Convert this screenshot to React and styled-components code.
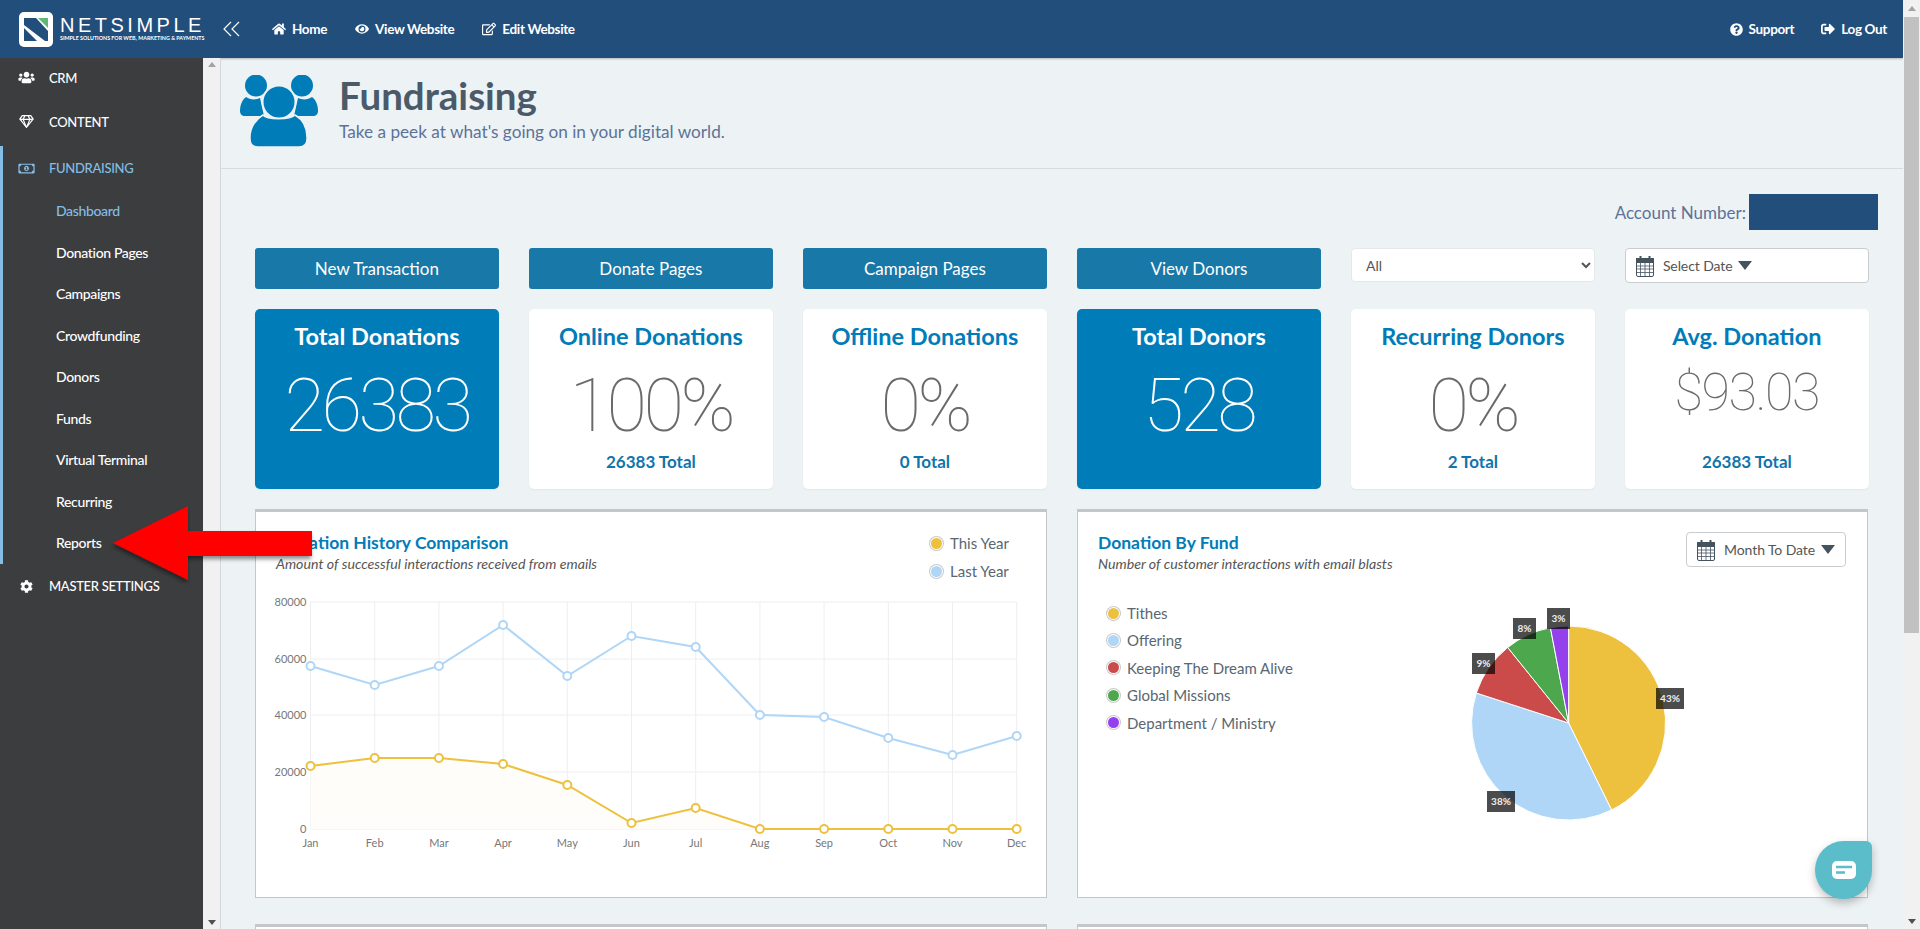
import React from 'react'
import styled, { createGlobalStyle } from 'styled-components'
import {
  FaHome, FaEye, FaRegEdit, FaQuestionCircle, FaSignOutAlt, FaUsers, FaRegGem, FaRegMoneyBillAlt, FaCog,
} from 'react-icons/fa'

const font = `Lato, "Noto Sans", "Liberation Sans", sans-serif`

const GlobalStyle = createGlobalStyle`
  html, body { margin: 0; padding: 0; height: 100%; overflow: hidden; }
  body { font-family: ${font}; background: #edf2f5; }
  * { box-sizing: border-box; }
`

const Root = styled.div`
  position: relative;
  display: flex;
  width: 1920px;
  height: 929px;
  overflow: hidden;
`
const Page = styled.div`
  flex: 1;
  min-width: 0;
  display: flex;
  flex-direction: column;
`
const TopBar = styled.header`
  height: 58px;
  flex: none;
  background: #224e7c;
  display: flex;
  align-items: center;
  padding: 0 19px;
  color: #fff;
  box-shadow: 0 1px 2px rgba(0, 0, 0, 0.25);
`
const Logo = styled.div`
  display: flex;
  align-items: center;
  gap: 7px;
  width: 204px;
  flex: none;
`
const LogoMark = styled.div`
  width: 34px;
  height: 35px;
  flex: none;
  background: #fff;
  border-radius: 5px;
  display: flex;
  align-items: center;
  justify-content: center;
`
const LogoText = styled.div`
  display: flex;
  flex-direction: column;
  color: #fff;
`
const LogoName = styled.span`
  font-family: "Liberation Sans", sans-serif;
  font-size: 20px;
  line-height: 18px;
  letter-spacing: 3.5px;
`
const LogoTag = styled.span`
  font-size: 5.35px;
  line-height: 8px;
  font-weight: 700;
  white-space: nowrap;
`
const TopNav = styled.nav`
  display: flex;
  align-items: center;
  gap: 28px;
  margin-left: 31px;
`
const TopLink = styled.a`
  display: flex;
  align-items: center;
  gap: 6px;
  font-size: 13.5px;
  font-weight: 700;
  letter-spacing: -0.35px;
  color: #fff;
  white-space: nowrap;
`
const TopRight = styled(TopNav)`
  margin-left: auto;
  margin-right: -3px;
  gap: 27px;
`
const Body = styled.div`
  flex: 1;
  display: flex;
  min-height: 0;
`
const Sidebar = styled.aside`
  width: 203px;
  flex: none;
  background: #3c3d3f;
  color: #fff;
`
const SideTop = styled.div`
  display: flex;
  align-items: center;
  height: ${({ $h }) => $h || 45}px;
  padding-left: 18px;
  gap: 14px;
  font-size: 13px;
  letter-spacing: -0.3px;
  font-weight: 500;
  color: ${({ $active }) => ($active ? '#84bde6' : '#fff')};
  svg { width: 17px; flex: none; }
`
const SideGroup = styled.div`
  border-left: 3px solid #84bde6;
  ${SideTop} { padding-left: 15px; height: 44px; }
`
const SubItem = styled.div`
  height: 41.5px;
  display: flex;
  align-items: center;
  padding-left: 53px;
  font-size: 14px;
  letter-spacing: -0.35px;
  font-weight: 500;
  color: ${({ $active }) => ($active ? '#84bde6' : '#fff')};
`
const SideScroll = styled.div`
  width: 17px;
  flex: none;
  background: #f1f1f1;
  display: flex;
  flex-direction: column;
  justify-content: space-between;
  align-items: center;
  padding: 4px 0;
`
const ArrowUp = styled.i`
  width: 0;
  height: 0;
  border-left: 4px solid transparent;
  border-right: 4px solid transparent;
  border-bottom: 5px solid #a3a3a3;
`
const ArrowDown = styled.i`
  display: block;
  width: 0;
  height: 0;
  border-left: 4px solid transparent;
  border-right: 4px solid transparent;
  border-top: 5px solid #505050;
`
const Main = styled.main`
  flex: 1;
  min-width: 0;
  border-left: 1px solid #d5d8da;
  overflow: hidden;
`
const PageHead = styled.div`
  height: 111px;
  border-bottom: 1px solid #d8dcdf;
  display: flex;
  padding: 17px 0 0 19px;
  gap: 21px;
`
const PageTitle = styled.h1`
  margin: -2px 0 0;
  font-size: 38.5px;
  line-height: 44px;
  font-weight: 700;
  color: #4a5a68;
`
const PageSub = styled.p`
  margin: 5px 0 0;
  font-size: 17.2px;
  line-height: 20px;
  color: #5c7299;
`
const Content = styled.div`
  padding: 25px 34px 0 34px;
`
const AccountRow = styled.div`
  display: flex;
  justify-content: flex-end;
  align-items: center;
  height: 36px;
  gap: 3px;
  margin-right: -9px;
  font-size: 17px;
  color: #5c7299;
`
const Redacted = styled.span`
  width: 129px;
  height: 36px;
  background: #224e7c;
`
const Grid = styled.div`
  display: grid;
  grid-template-columns: repeat(6, 243.8px);
  column-gap: 30.2px;
  margin-top: ${({ $mt }) => $mt}px;
`
const ActionButton = styled.a`
  height: 41px;
  background: #1878a8;
  border-radius: 3px;
  color: #fff;
  display: flex;
  align-items: center;
  justify-content: center;
  font-size: 17px;
`
const Select = styled.select`
  height: 34px;
  background: #fff;
  border: 1px solid #e4e8ea;
  border-radius: 4px;
  font-family: ${font};
  font-size: 14px;
  color: #555;
  padding-left: 10px;
`
const DateButton = styled.div`
  height: 35px;
  display: flex;
  align-items: center;
  gap: 9px;
  padding: 0 10px;
  background: #fff;
  border: 1px solid #c9cdd0;
  border-radius: 4px;
  font-size: 14px;
  letter-spacing: -0.1px;
  color: #555;
`
const Caret = styled.i`
  width: 0;
  height: 0;
  margin-left: -3px;
  border-left: 7px solid transparent;
  border-right: 7px solid transparent;
  border-top: 9px solid #45535f;
`
const StatCard = styled.div`
  height: 180px;
  border-radius: 5px;
  background: ${({ $solid }) => ($solid ? '#007cb8' : '#fff')};
  color: ${({ $solid }) => ($solid ? '#fff' : '#6a6a6a')};
  box-shadow: 0 1px 2px rgba(0, 0, 0, 0.05);
  display: flex;
  flex-direction: column;
  align-items: center;
  text-align: center;
`
const StatTitle = styled.div`
  margin-top: 12px;
  height: 30px;
  line-height: 30px;
  font-size: 23.5px;
  font-weight: 700;
  color: ${({ $solid }) => ($solid ? '#fff' : '#007cb8')};
`
const StatValue = styled.div`
  margin-top: ${({ $small }) => ($small ? 4 : 17)}px;
  height: 76px;
  line-height: 76px;
  font-family: Roboto, ${font};
  font-size: ${({ $small }) => ($small ? 52 : 74)}px;
  letter-spacing: ${({ $small }) => ($small ? -1.5 : -3.5)}px;
  font-weight: 100;
`
const StatFoot = styled.div`
  margin-top: ${({ $small }) => ($small ? 21 : 8)}px;
  font-size: 17px;
  line-height: 20px;
  font-weight: 700;
  color: #0f75ab;
`
const ChartGrid = styled.div`
  display: grid;
  grid-template-columns: 792px 791px;
  column-gap: 30px;
  row-gap: 26px;
  margin-top: 20px;
`
const ChartCard = styled.section`
  height: 389px;
  background: #fff;
  border: 1px solid #c4c6c8;
  border-top: 3px solid #c4c6c8;
`
const CardHead = styled.div`
  height: 78px;
  display: flex;
  justify-content: space-between;
  padding: 20px 21px 0 20px;
`
const CardTitle = styled.h3`
  margin: 0;
  font-size: 17.5px;
  line-height: 22px;
  font-weight: 700;
  color: #007cb8;
`
const CardSub = styled.p`
  margin: -1px 0 0;
  font-size: 14.2px;
  line-height: 22px;
  font-style: italic;
  color: #555;
`
const Legend = styled.ul`
  list-style: none;
  margin: 0;
  padding: 0;
  display: flex;
  flex-direction: column;
  gap: ${({ $gap }) => $gap}px;
`
const LegendItem = styled.li`
  display: flex;
  align-items: center;
  gap: 8px;
  height: 20px;
  font-size: 15px;
  color: #5a6670;
`
const Dot = styled.i`
  width: 11px;
  height: 11px;
  border-radius: 50%;
  background: ${({ $c }) => $c};
  box-shadow: 0 0 0 1px #fff, 0 0 0 2px #c9c9c9;
`
const YearLegend = styled.div`
  margin-right: 16px;
  padding-top: 1px;
`
const PieBody = styled.div`
  display: flex;
`
const PieLegend = styled.div`
  width: 330px;
  padding: 13px 0 0 30px;
`
const PageScroll = styled.div`
  width: 17px;
  flex: none;
  background: #f1f1f1;
  display: flex;
  flex-direction: column;
  align-items: center;
  padding-top: 6px;
`
const Thumb = styled.div`
  width: 15px;
  height: 616px;
  margin-top: 6px;
  background: #c1c1c1;
`
const BottomArrow = styled.div`
  margin-top: auto;
  padding-bottom: 5px;
`
const Pointer = styled.svg`
  position: absolute;
  left: 100px;
  top: 495px;
  pointer-events: none;
`
const ChatBubble = styled.div`
  position: absolute;
  left: 1815px;
  top: 841px;
  width: 57px;
  height: 58px;
  background: #5bbcca;
  border-radius: 50% 6px 50% 50%;
  box-shadow: 0 4px 8px rgba(0, 0, 0, 0.25);
  display: flex;
  align-items: center;
  justify-content: center;
`

const months = ['Jan', 'Feb', 'Mar', 'Apr', 'May', 'Jun', 'Jul', 'Aug', 'Sep', 'Oct', 'Nov', 'Dec']
const lastYear = [666, 685, 666, 625, 676, 636, 647, 715, 717, 738, 755, 736]
const thisYear = [766, 758, 758, 764, 785, 823, 808, 829, 829, 829, 829, 829]
const chartLeft = 310.5
const chartStep = 64.2
const chartOrigin = { x: 256, y: 590 }
const px = (i) => chartLeft + i * chartStep - chartOrigin.x
const py = (y) => y - chartOrigin.y
const linePath = (arr) => arr.map((y, i) => `${i ? 'L' : 'M'}${px(i)} ${py(y)}`).join(' ')

const LineChart = () => (
  <svg width="790" height="270" style={{ display: 'block' }}>
    {[602, 659, 715, 772, 829].map((y, i) => (
      <g key={y}>
        <line x1={px(0)} x2={px(11)} y1={py(y)} y2={py(y)} stroke="#eeeeee" />
        <text x={px(0) - 4} y={py(y) + 4} textAnchor="end" fontSize="11" fill="#777">{80000 - i * 20000}</text>
      </g>
    ))}
    {months.map((m, i) => (
      <g key={m}>
        <line x1={px(i)} x2={px(i)} y1={py(602)} y2={py(829)} stroke="#eeeeee" />
        <text x={px(i)} y={py(847)} textAnchor="middle" fontSize="11" fill="#777">{m}</text>
      </g>
    ))}
    <path d={`${linePath(thisYear)} L${px(11)} ${py(829)} L${px(0)} ${py(829)} Z`} fill="#fefdf9" />
    <path d={linePath(lastYear)} fill="none" stroke="#afd6f7" strokeWidth="2" />
    <path d={linePath(thisYear)} fill="none" stroke="#edc13e" strokeWidth="2" />
    {lastYear.map((y, i) => <circle key={i} cx={px(i)} cy={py(y)} r="4" fill="#fff" stroke="#afd6f7" strokeWidth="2" />)}
    {thisYear.map((y, i) => <circle key={i} cx={px(i)} cy={py(y)} r="4" fill="#fff" stroke="#edc13e" strokeWidth="2" />)}
  </svg>
)

const slices = [
  { from: 0, to: 0.427, color: '#edc13e' },
  { from: 0.427, to: 0.8, color: '#afd6f7' },
  { from: 0.8, to: 0.892, color: '#cb4b4b' },
  { from: 0.892, to: 0.97, color: '#4da74d' },
  { from: 0.97, to: 1, color: '#9440ed' },
]
const pieLabels = [
  { t: '43%', x: 1656, y: 688, w: 28 },
  { t: '38%', x: 1487, y: 791, w: 28 },
  { t: '9%', x: 1472, y: 653, w: 23 },
  { t: '8%', x: 1513, y: 618, w: 23 },
  { t: '3%', x: 1547, y: 608, w: 23 },
]
const pieOrigin = { x: 1408, y: 590 }
const pieCx = 1568.6 - pieOrigin.x
const pieCy = 723 - pieOrigin.y
const polar = (f) => {
  const a = f * 2 * Math.PI
  return `${pieCx + 97 * Math.sin(a)} ${pieCy - 97 * Math.cos(a)}`
}

const PieChart = () => (
  <svg width="459" height="270" style={{ display: 'block' }}>
    {slices.map((s) => (
      <path
        key={s.color}
        d={`M${pieCx} ${pieCy} L${polar(s.from)} A97 97 0 ${s.to - s.from > 0.5 ? 1 : 0} 1 ${polar(s.to)} Z`}
        fill={s.color}
        stroke="#fff"
      />
    ))}
    {pieLabels.map((l) => (
      <g key={l.t}>
        <rect x={l.x - pieOrigin.x} y={l.y - pieOrigin.y} width={l.w} height="21" fill="#000" fillOpacity="0.7" />
        <text x={l.x - pieOrigin.x + l.w / 2} y={l.y - pieOrigin.y + 14} textAnchor="middle" fontSize="10" fontWeight="700" fill="#eee">{l.t}</text>
      </g>
    ))}
  </svg>
)

const PeopleIcon = () => (
  <svg width="78" height="73" viewBox="0 0 78 73" fill="#007cb8">
    <ellipse cx="16" cy="10.5" rx="11" ry="11" />
    <ellipse cx="62" cy="10.5" rx="11" ry="11" />
    <path d="M6 22c4 3 10 3 14 1l4 18H5c-3 0-5-2-5-5 0-6 2-11 6-14z" />
    <path d="M72 22c-4 3-10 3-14 1l-4 18h19c3 0 5-2 5-5 0-6-2-11-6-14z" />
    <ellipse cx="39" cy="27" rx="16.5" ry="16.5" stroke="#edf2f5" strokeWidth="2" />
    <path d="M23 40c4 5 27 5 32 0 7 4 12 12 12 22v2c0 5-3 8-8 8H18c-5 0-8-3-8-8v-2c0-10 6-18 13-22z" stroke="#edf2f5" strokeWidth="1.5" />
  </svg>
)

const CalendarIcon = () => (
  <svg width="18" height="22" viewBox="0 0 18 22" fill="none" stroke="#45535f">
    <rect x="0.5" y="3.5" width="17" height="18" rx="1.5" fill="#fff" />
    <rect x="0.5" y="3.5" width="17" height="4" fill="#45535f" />
    <path d="M4.5 1v4M13.5 1v4" strokeWidth="2" />
    <path d="M0.5 11h17M0.5 14h17M0.5 17.5h17M4.5 8v13M9 8v13M13.5 8v13" strokeWidth="0.8" />
  </svg>
)

const LogoIcon = () => (
  <svg width="24" height="23" viewBox="0 0 24 23">
    <path d="M14 0h10v10z" fill="#5fb878" />
    <path d="M0 0h12l12 13v10h-3L0 7z" fill="#224e7c" />
    <path d="M0 10l13 13H0z" fill="#224e7c" />
  </svg>
)

const sideLinks = ['Dashboard', 'Donation Pages', 'Campaigns', 'Crowdfunding', 'Donors', 'Funds', 'Virtual Terminal', 'Recurring', 'Reports']
const actions = ['New Transaction', 'Donate Pages', 'Campaign Pages', 'View Donors']
const stats = [
  { title: 'Total Donations', value: '26383', solid: true },
  { title: 'Online Donations', value: '100%', foot: '26383 Total' },
  { title: 'Offline Donations', value: '0%', foot: '0 Total' },
  { title: 'Total Donors', value: '528', solid: true },
  { title: 'Recurring Donors', value: '0%', foot: '2 Total' },
  { title: 'Avg. Donation', value: '$93.03', foot: '26383 Total', small: true },
]
const funds = [
  ['Tithes', '#edc13e'],
  ['Offering', '#afd6f7'],
  ['Keeping The Dream Alive', '#cb4b4b'],
  ['Global Missions', '#4da74d'],
  ['Department / Ministry', '#9440ed'],
]

const App = () => (
  <Root>
    <GlobalStyle />
    <Page>
      <TopBar>
        <Logo>
          <LogoMark><LogoIcon /></LogoMark>
          <LogoText>
            <LogoName>NETSIMPLE</LogoName>
            <LogoTag>SIMPLE SOLUTIONS FOR WEB, MARKETING &amp; PAYMENTS</LogoTag>
          </LogoText>
        </Logo>
        <svg width="18" height="16" viewBox="0 0 18 16" fill="none" stroke="#fff" strokeWidth="1.2" style={{ flex: 'none' }}>
          <path d="M8 1L1 8l7 7M16 1L9 8l7 7" />
        </svg>
        <TopNav>
          <TopLink><FaHome size={14} />Home</TopLink>
          <TopLink><FaEye size={14} />View Website</TopLink>
          <TopLink><FaRegEdit size={14} />Edit Website</TopLink>
        </TopNav>
        <TopRight>
          <TopLink><FaQuestionCircle size={13} />Support</TopLink>
          <TopLink><FaSignOutAlt size={14} />Log Out</TopLink>
        </TopRight>
      </TopBar>
      <Body>
        <Sidebar>
          <SideTop $h={39}><FaUsers />CRM</SideTop>
          <SideTop $h={49}><FaRegGem />CONTENT</SideTop>
          <SideGroup>
            <SideTop $active><FaRegMoneyBillAlt />FUNDRAISING</SideTop>
            {sideLinks.map((l, i) => <SubItem key={l} $active={i === 0}>{l}</SubItem>)}
          </SideGroup>
          <SideTop><FaCog />MASTER SETTINGS</SideTop>
        </Sidebar>
        <SideScroll><ArrowUp /><ArrowDown /></SideScroll>
        <Main>
          <PageHead>
            <PeopleIcon />
            <div>
              <PageTitle>Fundraising</PageTitle>
              <PageSub>Take a peek at what's going on in your digital world.</PageSub>
            </div>
          </PageHead>
          <Content>
            <AccountRow>Account Number:<Redacted /></AccountRow>
            <Grid $mt={18}>
              {actions.map((a) => <ActionButton key={a}>{a}</ActionButton>)}
              <Select defaultValue="All"><option>All</option></Select>
              <DateButton><CalendarIcon />Select Date<Caret /></DateButton>
            </Grid>
            <Grid $mt={20}>
              {stats.map((s) => (
                <StatCard key={s.title} $solid={s.solid}>
                  <StatTitle $solid={s.solid}>{s.title}</StatTitle>
                  <StatValue $small={s.small}>{s.value}</StatValue>
                  {s.foot && <StatFoot $small={s.small}>{s.foot}</StatFoot>}
                </StatCard>
              ))}
            </Grid>
            <ChartGrid>
              <ChartCard>
                <CardHead>
                  <div>
                    <CardTitle>Donation History Comparison</CardTitle>
                    <CardSub>Amount of successful interactions received from emails</CardSub>
                  </div>
                  <YearLegend>
                    <Legend $gap={8}>
                      <LegendItem><Dot $c="#edc13e" />This Year</LegendItem>
                      <LegendItem><Dot $c="#afd6f7" />Last Year</LegendItem>
                    </Legend>
                  </YearLegend>
                </CardHead>
                <LineChart />
              </ChartCard>
              <ChartCard>
                <CardHead>
                  <div>
                    <CardTitle>Donation By Fund</CardTitle>
                    <CardSub>Number of customer interactions with email blasts</CardSub>
                  </div>
                  <DateButton><CalendarIcon />Month To Date<Caret /></DateButton>
                </CardHead>
                <PieBody>
                  <PieLegend>
                    <Legend $gap={7.4}>
                      {funds.map(([n, c]) => <LegendItem key={n}><Dot $c={c} />{n}</LegendItem>)}
                    </Legend>
                  </PieLegend>
                  <PieChart />
                </PieBody>
              </ChartCard>
              <ChartCard />
              <ChartCard />
            </ChartGrid>
          </Content>
        </Main>
      </Body>
    </Page>
    <PageScroll>
      <ArrowUp />
      <Thumb />
      <BottomArrow><ArrowDown /></BottomArrow>
    </PageScroll>
    <Pointer width="220" height="100" viewBox="100 495 220 100">
      <defs>
        <filter id="arrowShadow" x="-10%" y="-10%" width="120%" height="130%">
          <feDropShadow dx="-1" dy="3" stdDeviation="2" floodColor="#000" floodOpacity="0.45" />
        </filter>
      </defs>
      <path d="M113 543L188 506V531H312V556H188V580Z" fill="#fe0000" filter="url(#arrowShadow)" />
    </Pointer>
    <ChatBubble>
      <svg width="24" height="18" viewBox="0 0 24 18">
        <rect width="24" height="18" rx="5" fill="#fff" />
        <path d="M4 6h16M4 11.5h9" stroke="#5bbcca" strokeWidth="2.4" />
      </svg>
    </ChatBubble>
  </Root>
)

export default App
